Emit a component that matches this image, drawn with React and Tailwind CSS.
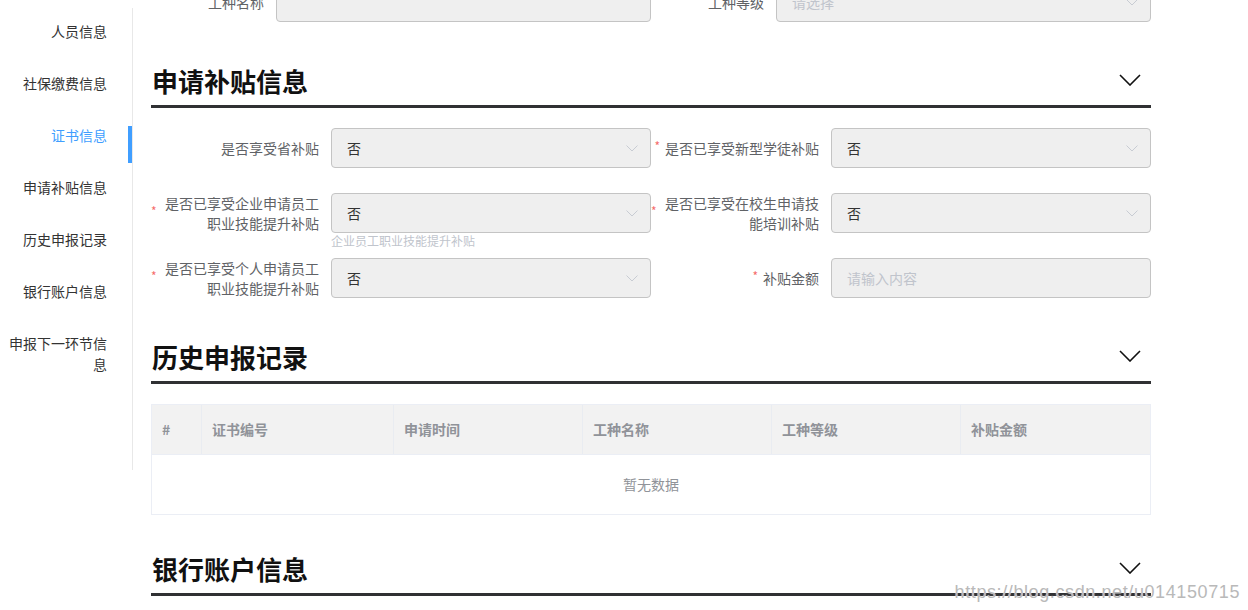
import { useState } from 'react';

const menu = ['人员信息', '社保缴费信息', '证书信息', '申请补贴信息', '历史申报记录', '银行账户信息', '申报下一环节信息'];

const subsidyRows = [
  [
    { label: '是否享受省补贴', value: '否' },
    { label: '是否已享受新型学徒补贴', required: true, value: '否' },
  ],
  [
    { label: '是否已享受企业申请员工职业技能提升补贴', required: true, value: '否', help: '企业员工职业技能提升补贴' },
    { label: '是否已享受在校生申请技能培训补贴', required: true, value: '否' },
  ],
  [
    { label: '是否已享受个人申请员工职业技能提升补贴', required: true, value: '否' },
    { label: '补贴金额', required: true, placeholder: '请输入内容', text: true },
  ],
];

const columns = [
  { title: '#', w: 'w-[50px]' },
  { title: '证书编号', w: 'w-[192px]' },
  { title: '申请时间', w: 'w-[189px]' },
  { title: '工种名称', w: 'w-[189px]' },
  { title: '工种等级', w: 'w-[189px]' },
  { title: '补贴金额', w: 'w-[189px]' },
];

const SmallChevron = () => (
  <svg width="12" height="7" viewBox="0 0 12 7" className="shrink-0">
    <polyline points="0.5,0.5 6,6 11.5,0.5" fill="none" stroke="#c8ccd3" strokeWidth="1" />
  </svg>
);

const FakeInput = ({ value, placeholder, text, width }) => (
  <div className={`${width} h-[40px] shrink-0 rounded-[4px] border border-[#c4c4c4] bg-[#efefef] pl-[15px] pr-[12px] flex items-center justify-between`}>
    {value ? (
      <span className="text-[14px] text-[#333]">{value}</span>
    ) : (
      <span className="text-[14px] text-[#c0c4cc]">{placeholder}</span>
    )}
    {!text && <SmallChevron />}
  </div>
);

const Label = ({ label, required, width }) => (
  <div className={`${width} shrink-0 pr-[12px] flex items-center justify-end`}>
    {required && <span className="mr-[5px] -mt-[4px] text-[12px] leading-none text-[#f56c6c]">*</span>}
    <span className="text-right text-[14px] leading-[20px] text-[#606266]">{label}</span>
  </div>
);

const FormItem = ({ item }) => (
  <div className="w-[500px] flex">
    <Label label={item.label} required={item.required} width="w-[180px]" />
    <div className="relative">
      <FakeInput value={item.value} placeholder={item.placeholder} text={item.text} width="w-[320px]" />
      {item.help && (
        <div className="absolute left-0 top-full mt-[1px] text-[12px] leading-[14px] text-[#c0c4cc] whitespace-nowrap">{item.help}</div>
      )}
    </div>
  </div>
);

const SectionHeader = ({ title }) => (
  <div className="mt-[8px] h-[53px] shrink-0 flex items-center justify-between border-b-[3px] border-[#303133]">
    <h2 className="pl-[1px] pt-[1px] text-[26px] font-bold leading-none text-[#111]">{title}</h2>
    <svg width="22" height="12" viewBox="0 0 22 12" className="mr-[10px]">
      <polyline points="1,1 11,11 21,1" fill="none" stroke="#111" strokeWidth="1.6" />
    </svg>
  </div>
);

export default function App() {
  const [active] = useState(2);

  return (
    <div className="relative flex h-[610px] w-[1248px] overflow-hidden bg-white font-['Noto_Sans_CJK_SC','Noto_Sans',sans-serif]">
      {/* side nav */}
      <aside className="mt-[8px] h-[462px] w-[133px] shrink-0 border-r border-[#e8e8e8]">
        {menu.map((m, i) => (
          <div key={m} className="relative h-[52px] pt-[13px] pl-[8px] pr-[25px] text-right text-[14px] leading-[21px]">
            <span className={i === active ? 'text-[#409eff]' : 'text-[#333]'}>{m}</span>
            {i === active && <div className="absolute right-0 top-[14px] h-[37px] w-[4px] bg-[#409eff]" />}
          </div>
        ))}
      </aside>

      <main className="ml-[18px] -mt-[18px] w-[1000px] shrink-0 flex flex-col">
        {/* tail of the previous section */}
        <div className="mb-[25px] flex shrink-0">
          <div className="w-[500px] flex">
            <Label label="工种名称" required width="w-[125px]" />
            <FakeInput text width="w-[375px]" />
          </div>
          <div className="w-[500px] flex">
            <Label label="工种等级" required width="w-[125px]" />
            <FakeInput placeholder="请选择" width="w-[375px]" />
          </div>
        </div>

        <SectionHeader title="申请补贴信息" />
        <div className="mt-[20px] flex flex-col shrink-0">
          {subsidyRows.map((row, i) => (
            <div key={i} className="mb-[25px] flex">
              {row.map((item) => (
                <FormItem key={item.label} item={item} />
              ))}
            </div>
          ))}
        </div>

        <SectionHeader title="历史申报记录" />
        <div className="mt-[20px] mb-[20px] shrink-0 border border-[#ebeef5]">
          <div className="flex h-[50px] bg-[#f2f2f2] border-b border-[#ebeef5]">
            {columns.map((c, i) => (
              <div
                key={c.title}
                className={`${c.w} pl-[10px] flex items-center text-[14px] font-semibold text-[#909399] ${i < columns.length - 1 ? 'border-r border-[#e9ecf1]' : ''}`}
              >
                {c.title}
              </div>
            ))}
          </div>
          <div className="flex h-[59px] items-center justify-center text-[14px] text-[#909399]">暂无数据</div>
        </div>

        <SectionHeader title="银行账户信息" />
      </main>

      <div className="absolute right-[8px] top-[581px] font-['Liberation_Sans',sans-serif] text-[18px] leading-[22px] tracking-[0.6px] text-[#b9b9b9] [text-shadow:0_0_1px_#fff]">
        https://blog.csdn.net/u014150715
      </div>
    </div>
  );
}
